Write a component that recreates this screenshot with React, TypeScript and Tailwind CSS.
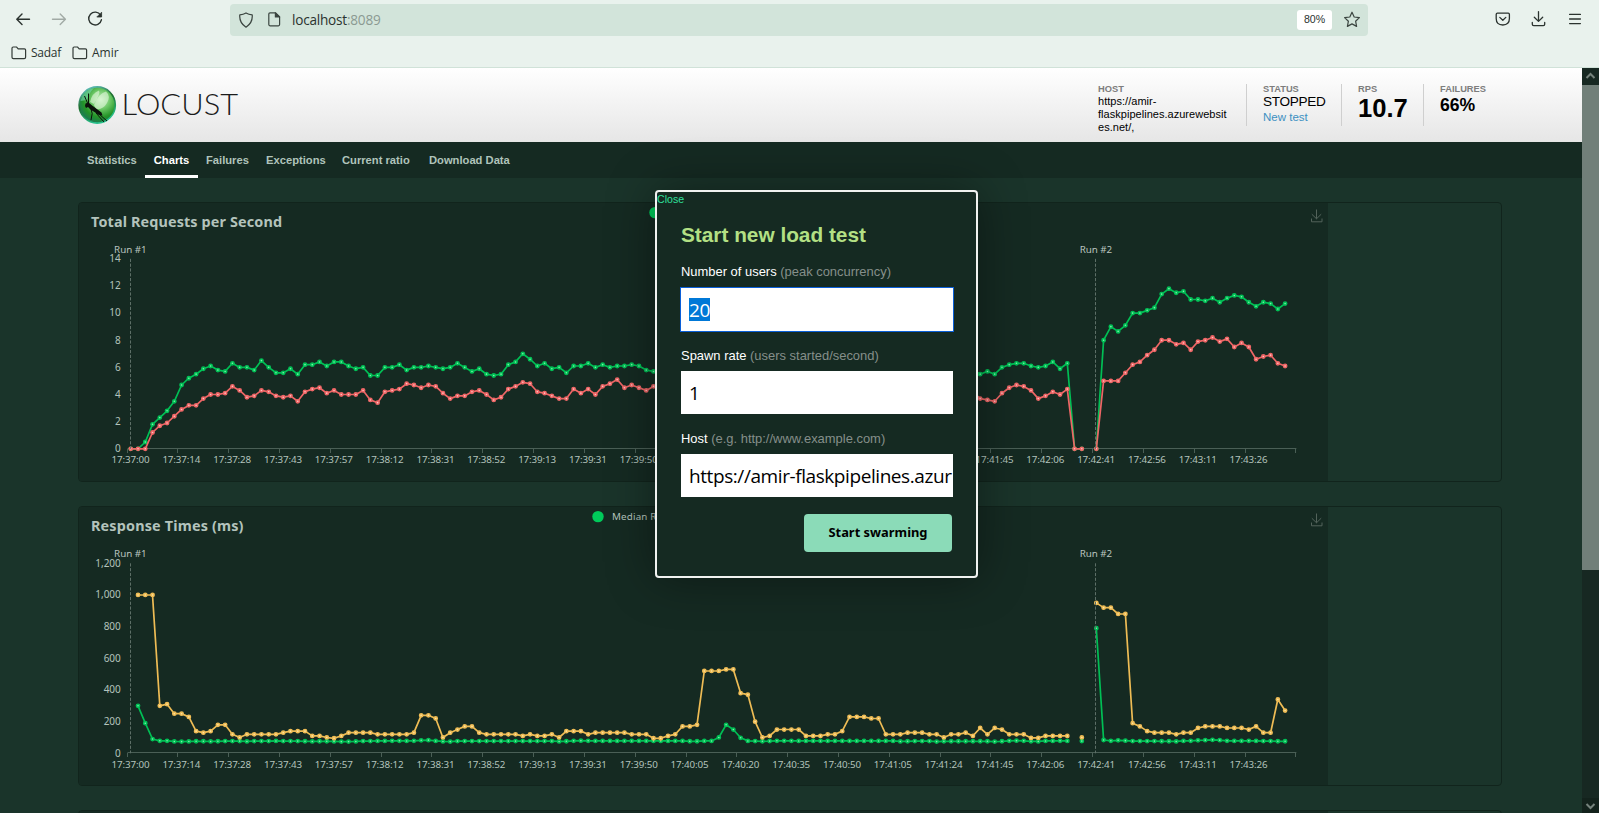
import React from "react";

type Series = { color: string; core: string; data: (number | null)[] };

const N = null;
const TIMES = ["17:37:00","17:37:14","17:37:28","17:37:43","17:37:57","17:38:12","17:38:31","17:38:52","17:39:13","17:39:31","17:39:50","17:40:05","17:40:20","17:40:35","17:40:50","17:41:05","17:41:24","17:41:45","17:42:06","17:42:41","17:42:56","17:43:11","17:43:26"];

const rep = (n: number, v: number | null) => Array.from({ length: n }, () => v);

const RPS: (number | null)[] = [
  0,0,0.5,1.8,2.3,2.8,3.5,4.7,5.2,5.5,5.9,6.1,5.8,5.7,6.3,6,6,5.8,6.5,6,5.6,5.6,5.9,5.5,6.2,6.2,6.4,6.1,6.4,6.4,6.1,5.9,6,5.4,5.4,
  6,6,6.2,5.8,6,6,6.1,6,5.9,6,6.3,6,5.7,5.9,5.5,5.4,5.5,6.2,6.4,7,6.6,6.1,6.3,5.9,6,5.6,6.1,6.1,6.3,6,6.2,6,6.1,6.1,6.2,6.1,5.8,5.7,
  ...rep(44, 5.8),
  5.5,5.7,5.5,6,6.2,6.3,6.3,6.1,6,6.1,6.4,5.9,6.3,0,0,N,0,8,9,8.65,9.1,10,10,10.2,10.4,11.4,11.8,11.5,11.6,11,11,10.9,11.1,10.8,11.1,11.3,11.2,10.8,10.5,10.8,10.7,10.3,10.7,
];
const FAILS: (number | null)[] = [
  0,0,0,1.2,1.7,1.9,2.4,2.9,3.2,3.2,3.7,4,4,4.1,4.6,4.3,3.8,3.9,4.3,4.2,3.9,3.8,3.9,3.5,4.2,4.4,4.5,4.1,4.3,4,4,4,4.3,3.6,3.4,
  4.2,4.3,4.4,4.8,4.7,4.5,4.7,4.6,4.1,3.7,3.9,3.9,4.2,4.3,4,3.6,3.8,4.4,4.6,4.9,4.8,4.2,4.1,3.9,3.7,3.7,4.4,4.1,4.4,4,4.6,4.8,5.1,4.5,4.7,4.5,4.3,4.6,
  ...rep(44, 4.2),
  3.7,3.6,3.5,4.1,4.5,4.7,4.6,4.3,3.7,3.9,4.2,4,4.4,0,0,N,0,5,5,5,5.6,6.2,6.4,6.9,7.3,8,8,7.7,7.8,7.3,7.9,8,8.2,7.9,8.1,7.5,7.8,7.5,6.6,6.8,6.9,6.3,6.1,
];
const MEDIAN: (number | null)[] = [
  N,300,190,90,79,79,75,74,75,76,76,75,76,77,77,77,75,77,77,77,78,77,77,77,76,75,76,76,75,74,74,75,77,77,78,78,79,79,78,79,82,83,78,75,74,
  ...rep(14, 77),75,76,79,80,79,...rep(13, 78),76,76,78,78,100,180,150,98,78,77,76,77,79,79,79,...rep(14, 78),75,76,77,77,77,74,76,...rep(6, 76),74,76,79,80,79,76,75,78,78,79,78,
  N,77,N,790,84,79,82,80,77,77,77,77,76,76,75,78,79,82,83,85,83,79,78,78,79,78,77,77,76,76,
];
const P95: (number | null)[] = [
  N,1000,1000,1000,300,310,250,250,230,140,130,140,180,180,120,100,120,120,120,120,120,130,140,140,140,110,110,100,95,110,130,130,130,130,120,120,120,120,120,130,
  240,240,220,100,130,150,170,170,130,120,120,120,120,120,110,120,110,110,120,100,140,140,140,120,130,130,130,130,130,120,120,120,95,95,110,120,170,170,180,
  520,520,520,530,530,380,370,200,100,110,150,150,150,150,110,110,110,120,120,140,230,230,230,220,220,120,120,120,130,130,130,120,120,100,120,120,130,110,160,120,160,150,120,120,120,97,97,110,110,110,110,
  N,100,N,950,920,920,880,880,190,170,140,130,130,130,120,130,130,160,170,170,170,160,160,160,150,170,130,130,340,270,
];

const X0 = 127.5;
const STEP = 7.26;
const cx = (i: number) => X0 + STEP * (i + 0.45);

function Chart({ title, titleWidth, top, base, max, ticks, series, legend }: {
  title: string; titleWidth: number; top: number; base: number; max: number; ticks: string[]; series: Series[];
  legend: { x: number; label?: string };
}) {
  const height = 190;
  const y = (v: number) => base - (v / max) * height;
  return (
    <svg width="1249" height="279" viewBox={`79 ${top} 1249 279`} className="block shrink-0 bg-[#152a22] font-['Noto_Sans',sans-serif]">
      <text x="91" y={top + 23.6} textLength={titleWidth} fontSize="14.4" className="fill-[#b3c3bc] font-bold">{title}</text>
      <circle cx={legend.x} cy={top + 9.6} r="5.7" fill="#00ca5a" />
      {legend.label && <text x={legend.x + 14} y={top + 13} fontSize="9.8" textLength="110" className="fill-[#b3c3bc]">{legend.label}</text>}
      <g stroke="#4a5f56" strokeWidth="1">
        <path d={`M${X0} ${Math.round(base) - 0.5}H${X0 + STEP * 161}`} />
        {Array.from({ length: 24 }, (_, i) => (
          <path key={i} d={`M${Math.round(X0 + STEP * 7 * i) - 0.5} ${Math.round(base)}v4`} />
        ))}
      </g>
      <g fontSize="9.8" className="fill-[#b3c3bc]">
        {TIMES.map((t, i) => (
          <text key={t} x={cx(i * 7) - 0.2} y={base + 14.4} textAnchor="middle" textLength="38">{t}</text>
        ))}
        {ticks.map((t, i) => (
          <text key={t} x="120.8" y={base + 3.4 - (i * height) / (ticks.length - 1)} textAnchor="end" fontSize="10">{t}</text>
        ))}
      </g>
      {series.map((s, k) => (
        <g key={k}>
          <path
            fill="none" stroke={s.color} strokeWidth="1.7" strokeLinejoin="bevel"
            d={s.data.map((v, i) => (v === null ? "" : `${i === 0 || s.data[i - 1] === null ? "M" : "L"}${cx(i).toFixed(1)} ${y(v).toFixed(1)}`)).join("")}
          />
          {s.data.map((v, i) => v !== null && (
            <circle key={i} cx={cx(i)} cy={y(v)} r="1.6" fill={s.core} stroke={s.color} strokeWidth="1.6" />
          ))}
        </g>
      ))}
      {[0, 133].map((i, k) => (
        <g key={i}>
          <path d={`M${Math.round(cx(i)) - 0.5} ${base - height}V${base}`} stroke="#5d6f67" strokeDasharray="3.2 1.6" />
          <text x={cx(i) - 0.4} y={base - height - 6} textAnchor="middle" fontSize="9.8" textLength="32.5" className="fill-[#b9c4bf]">{`Run #${k + 1}`}</text>
        </g>
      ))}
      <path d={`M1316.5 ${top + 6.5}v9.3m-4.7 -4.6l4.7 4.6l4.7 -4.6M1311.5 ${top + 15.5}v3.3h10.5v-3.3`} fill="none" stroke="#53635b" strokeWidth="1" />
    </svg>
  );
}

function Card({ children }: { children?: React.ReactNode }) {
  return <section className="flex h-[280px] w-[1424px] shrink-0 overflow-hidden rounded border border-[#11241c]">{children}</section>;
}

function Folder() {
  return (
    <svg width="16" height="14" viewBox="0 0 16 14" fill="none" stroke="#333b37" strokeWidth="1.2">
      <path d="M1 2.2Q1 1 2.2 1H5.6L7.2 2.8H13.4Q14.6 2.8 14.6 4V11.2Q14.6 12.6 13.2 12.6H2.4Q1 12.6 1 11.2Z" />
    </svg>
  );
}

function BrowserBar() {
  return (
    <div className="flex h-[68px] flex-col border-b border-[#d0e2d8] bg-[#e9f2ed] font-['Open_Sans',sans-serif] text-[#2b332f]">
      <div className="flex h-[38px] items-center">
        <svg className="ml-4 shrink-0" width="88" height="16" viewBox="0 0 88 16" fill="none" strokeWidth="1.4" strokeLinecap="round" strokeLinejoin="round">
          <path stroke="#2b332f" d="M13.5 8.2H1M6 3L.8 8.2L6 13.4" />
          <path stroke="#a1aaa5" d="M36.5 8.2H49M44.2 3L49.4 8.2L44.2 13.4" />
          <path stroke="#2b332f" d="M84.6 4.2A6.4 6.4 0 1 0 85.4 8.8" />
          <path stroke="#2b332f" fill="#2b332f" strokeWidth=".8" d="M85.6 1.6V6H81.2Z" />
        </svg>
        <div className="ml-[126px] mt-[1px] flex h-8 w-[1138px] shrink-0 items-center rounded bg-[#d2e4da] pl-[9px]">
          <svg width="14" height="16" viewBox="0 0 14 16" fill="none" stroke="#3b4540" strokeWidth="1.2" strokeLinejoin="round">
            <path d="M7 .9Q9.6 2.4 13.2 2.8Q14 10.6 7 15.2Q0 10.6 .8 2.8Q4.4 2.4 7 .9Z" />
          </svg>
          <svg className="ml-[15px]" width="13" height="15" viewBox="0 0 13 15" fill="none" stroke="#3b4540" strokeWidth="1.2" strokeLinejoin="round">
            <path d="M2 .8H7.6L11.6 4.8V12.6Q11.6 13.8 10.4 13.8H2Q.8 13.8 .8 12.6V2Q.8 .8 2 .8Z" />
            <path d="M7.4 .8V5H11.6Z" fill="#3b4540" />
          </svg>
          <span className="ml-[11px] pt-[2px] text-[13.6px] tracking-[-0.22px]">localhost<span className="text-[#8b9a92]">:8089</span></span>
          <span className="ml-auto flex h-5 w-[35px] items-center justify-center rounded-[3px] bg-white pt-px font-['Liberation_Sans',sans-serif] text-[10.6px]">80%</span>
          <svg className="ml-[11px] mr-[7px]" width="18" height="17" viewBox="0 0 18 17" fill="none" stroke="#3b4540" strokeWidth="1.2" strokeLinejoin="round">
            <path d="M9 1.2L11.2 6L16.4 6.6L12.6 10.2L13.6 15.4L9 12.9L4.4 15.4L5.4 10.2L1.6 6.6L6.8 6Z" />
          </svg>
        </div>
        <svg className="ml-[127px] shrink-0" width="88" height="18" viewBox="0 0 88 18" fill="none" stroke="#2b332f" strokeWidth="1.3" strokeLinecap="round" strokeLinejoin="round">
          <path d="M2.4 3.2H13.2Q14.4 3.2 14.4 4.4V8.6Q14.4 15 7.8 15Q1.2 15 1.2 8.6V4.4Q1.2 3.2 2.4 3.2Z" />
          <path d="M4.8 7.4L7.8 10.3L10.8 7.4" />
          <path d="M43.500 1.6V11M39.300 7.2L43.500 11.4L47.700 7.2M37.300 12.4V14.2Q37.300 15.6 38.7 15.6H48.3Q49.7 15.6 49.7 14.2V12.4" />
          <path d="M74.6 4.4H85.4M74.6 9H85.4M74.6 13.6H85.4" />
        </svg>
      </div>
      <div className="flex h-[29px] items-center pl-[11px] pt-px text-[12px] tracking-[-0.25px]">
        <Folder /><span className="ml-[4px] w-[41px]">Sadaf</span>
        <Folder /><span className="ml-[4px] tracking-normal">Amir</span>
      </div>
    </div>
  );
}

function Logo() {
  return (
    <svg width="164" height="42" viewBox="0 0 164 42">
      <defs>
        <radialGradient id="globe" cx=".6" cy=".35" r=".65">
          <stop offset="0" stopColor="#c4efbc" />
          <stop offset=".4" stopColor="#6cc766" />
          <stop offset=".75" stopColor="#239427" />
          <stop offset="1" stopColor="#1c7a50" />
        </radialGradient>
        <linearGradient id="rim" x1="0" y1="0" x2=".4" y2="1">
          <stop offset="0" stopColor="#6fd3dd" />
          <stop offset=".5" stopColor="#1c6a2a" />
          <stop offset="1" stopColor="#27c08b" />
        </linearGradient>
      </defs>
      <circle cx="20.2" cy="20" r="18.1" fill="url(#globe)" stroke="url(#rim)" strokeWidth="1.6" />
      <path d="M3.500 16Q6 5 17 3Q12 8 10 15Z" fill="#7ddcc0" opacity=".55" />
      <path d="M13 17Q15 8 22 5.500Q24 8 17 19ZM17 20Q22 8 29 6.500Q34 11 30 18Q26 25 19 24Z" fill="#e4f8e0" opacity=".6" />
      <path d="M8 21L8.500 18.500L11.500 17.500L14.500 20L24.500 27.500L25.500 30.500L22 30L13.500 24.500L11 22L9 23Z" fill="#0b120b" />
      <path d="M10.500 18L7.500 11M11.500 18L11.500 8.500M14 24L15.200 28.500L14 35M19 28L27 37M22 29L30 36" fill="none" stroke="#0b120b" strokeWidth="1" />
      <text x="44.600" y="30.200" fontSize="29.500" textLength="116.500" lengthAdjust="spacingAndGlyphs" className="fill-[#1b1b1b] font-['Lato',sans-serif] font-light">LOCUST</text>
    </svg>
  );
}

function Header() {
  const label = "text-[9.300px] font-bold leading-[10px] text-[#7d7d7d]";
  return (
    <header className="flex h-[74px] bg-linear-to-b from-white to-[#e6e6e6] pl-[77px] font-['Liberation_Sans',sans-serif] text-black">
      <div className="mt-[17px]"><Logo /></div>
      <div className="ml-auto mr-[80px] mt-4 flex h-[42px]">
        <div className="w-[149px] border-r border-[#cfcfcf]">
          <div className={label}>HOST</div>
          <div className="mt-px w-[130px] text-[11px] leading-[13px] tracking-[0.03px]">https://amir-<br />flaskpipelines.azurewebsit<br />es.net/,</div>
        </div>
        <div className="w-[95px] border-r border-[#cfcfcf] pl-4">
          <div className={label}>STATUS</div>
          <div className="text-[13.600px] leading-[16px] tracking-[-0.3px]">STOPPED</div>
          <div className="text-[11.500px] leading-[14px] text-[#3d90c2]">New test</div>
        </div>
        <div className="w-[82px] border-r border-[#cfcfcf] pl-4">
          <div className={label}>RPS</div>
          <div className="text-[25.600px] font-bold leading-[29px]">10.7</div>
        </div>
        <div className="w-[78px] pl-4">
          <div className={label}>FAILURES</div>
          <div className="text-[17.600px] font-bold leading-[22px]">66%</div>
        </div>
      </div>
    </header>
  );
}

function Nav() {
  return (
    <nav className="flex h-9 bg-[#152a22] pl-[78px] font-['Liberation_Sans',sans-serif] text-[11.200px] font-bold leading-[37px] text-[#b0c4bb]">
      <span className="w-[67px] pl-[9px]">Statistics</span>
      <span className="w-[53px] border-b-[3px] border-white text-center text-white">Charts</span>
      <span className="w-[60px] pl-2">Failures</span>
      <span className="w-[76px] pl-2">Exceptions</span>
      <span className="w-[87px] pl-2">Current ratio</span>
      <span className="pl-2">Download Data</span>
    </nav>
  );
}

function Dialog() {
  const input = "h-[43px] w-[272px] overflow-hidden whitespace-nowrap bg-white pl-2 font-['Open_Sans',sans-serif] text-[19px] leading-[44px] tracking-[-0.42px] text-black";
  const label = "text-[12.950px] leading-[16px] text-white";
  return (
    <div className="absolute left-[655px] top-[190px] h-[388px] w-[323px] rounded-[4px] border-2 border-[#f0f2f0] bg-[#152a22] font-['Liberation_Sans',sans-serif] shadow-[0_0_48px_rgba(0,0,0,0.4)]">
      <div className="h-[31px] pt-[1px] text-[10.600px] leading-[13px] text-[#2fe09b]">Close</div>
      <div className="pl-6">
        <h2 className="text-[20.800px] font-bold leading-[24px] text-[#b3e084]">Start new load test</h2>
        <div className={`${label} mt-[17px]`}>Number of users <span className="text-[#858f8a]">(peak concurrency)</span></div>
        <div className={`${input} mt-2 outline outline-[#0a5fd8]`}><span className="inline-block h-[23px] bg-[#0078d7] leading-[24px] text-white">20</span></div>
        <div className={`${label} mt-[17px]`}>Spawn rate <span className="text-[#858f8a]">(users started/second)</span></div>
        <div className={`${input} mt-[7px]`}>1</div>
        <div className={`${label} mt-[17px]`}>Host <span className="text-[#858f8a]">(e.g. http://www.example.com)</span></div>
        <div className={`${input} mt-[7px]`}>https://amir-flaskpipelines.azur</div>
        <button className="ml-[123px] mt-[17px] block h-[38px] w-[148px] rounded bg-[#8bdbb8] font-['Noto_Sans',sans-serif] text-[12.900px] font-bold text-black">Start swarming</button>
      </div>
    </div>
  );
}

function Scrollbar() {
  return (
    <div className="flex h-[745px] w-[17px] flex-col bg-[#172822]">
      <svg width="17" height="17" fill="none" stroke="#75827c" strokeWidth="2"><path d="M4.500 10L8.500 6L12.500 10" /></svg>
      <div className="h-[485px] bg-[#717f79]" />
      <svg className="mt-auto bg-[#13221c]" width="17" height="15" fill="none" stroke="#75827c" strokeWidth="2"><path d="M4.500 6L8.500 10L12.500 6" /></svg>
    </div>
  );
}

export default function App() {
  return (
    <div className="relative h-[813px] w-[1599px] overflow-hidden bg-[#1a342a]">
      <BrowserBar />
      <div className="flex h-[745px]">
        <div className="h-[745px] w-[1582px] overflow-hidden">
          <Header />
          <Nav />
          <main className="flex flex-col gap-6 pl-[78px] pt-6">
            <Card>
              <Chart title="Total Requests per Second" titleWidth={191} top={203} base={448.8} max={14}
                ticks={["0", "2", "4", "6", "8", "10", "12", "14"]} legend={{ x: 655 }}
                series={[{ color: "#00bf55", core: "#7ff0ac", data: RPS }, { color: "#ee6666", core: "#ffc4c4", data: FAILS }]} />
            </Card>
            <Card>
              <Chart title="Response Times (ms)" titleWidth={152.500} top={507} base={753.3} max={1200}
                ticks={["0", "200", "400", "600", "800", "1,000", "1,200"]} legend={{ x: 598, label: "Median Response Time" }}
                series={[{ color: "#00bf55", core: "#7ff0ac", data: MEDIAN }, { color: "#eebc55", core: "#ffe6a8", data: P95 }]} />
            </Card>
            <Card><div className="w-[1249px] shrink-0 bg-[#152a22]" /></Card>
          </main>
        </div>
        <Scrollbar />
      </div>
      <Dialog />
    </div>
  );
}
